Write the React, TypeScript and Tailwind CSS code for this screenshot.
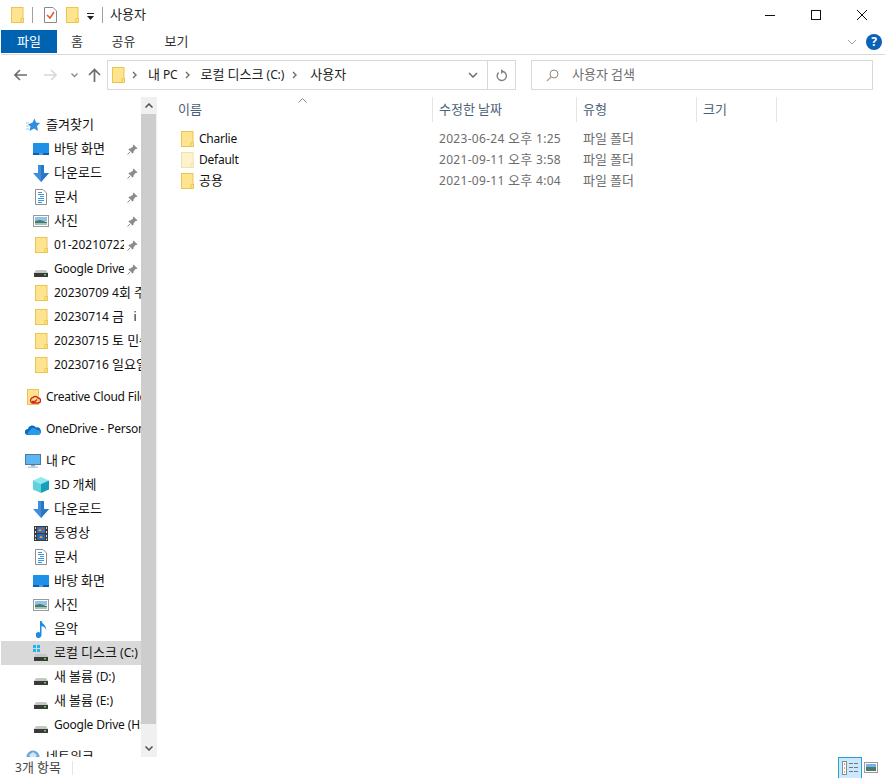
import type { ReactNode } from 'react';

const FONT = "font-['Noto_Sans','Noto_Sans_CJK_KR',sans-serif]";

// Hangul runs a size up (Noto's hangul is narrower than the original's), latin pulled in a touch
function T({ children }: { children: string }) {
  return (
    <>
      {children.split(/([\uAC00-\uD7A3]+|[A-Za-z]+)/).map((part, i) => {
        if (/^[\uAC00-\uD7A3]+$/.test(part)) return <span key={i} className="text-[13px] leading-[0]">{part}</span>;
        if (/^[A-Za-z]+$/.test(part)) return <span key={i} className="tracking-[-0.25px]">{part}</span>;
        return part;
      })}
    </>
  );
}

function Folder({ pale = false, className = '' }: { pale?: boolean; className?: string }) {
  return (
    <svg width="13" height="16" viewBox="0 0 13 16" className={`shrink-0 ${className}`}>
      <rect x="0.5" y="0.5" width="11.5" height="15" fill={pale ? '#fdf2cc' : '#fee48f'} stroke={pale ? '#f3e2a8' : '#e9c650'} />
      <path d="M10 15.5V11.5H12.5V15.5Z" fill={pale ? '#fdf2cc' : '#fee48f'} stroke={pale ? '#f3e2a8' : '#e9c650'} />
    </svg>
  );
}

function Desktop() {
  return (
    <svg width="16" height="12" viewBox="0 0 16 12">
      <rect width="16" height="12" rx="0.5" fill="#1e90e8" />
      <rect x="0" y="10" width="16" height="2" fill="#0d5fa8" />
      <rect x="6" y="10.5" width="4" height="1" fill="#9fd4f7" />
    </svg>
  );
}

function Download() {
  return (
    <svg width="16" height="17" viewBox="0 0 16 17">
      <path d="M5 0H11V8H16L8 17L0 8H5Z" fill="#3d8fde" />
      <path d="M8 0H11V8H16L8 17Z" fill="#2a76c4" />
    </svg>
  );
}

function Doc() {
  return (
    <svg width="12" height="16" viewBox="0 0 12 16">
      <path d="M0.5 0.5H8L11.5 4V15.5H0.5Z" fill="#fff" stroke="#8e8e8e" />
      <path d="M3 3.5H7M3 5.5H9M5 7.5H9M3 9.5H9M3 11.5H9M3 13.5H7" stroke="#3d97dc" strokeWidth="1" />
    </svg>
  );
}

function Picture() {
  return (
    <svg width="16" height="12" viewBox="0 0 16 12">
      <rect x="0.5" y="0.5" width="15" height="11" fill="#fff" stroke="#9a9a9a" strokeWidth="1" />
      <rect x="2" y="2" width="12" height="4" fill="#8cc4ee" />
      <path d="M2 6L7 5L14 7V10H2Z" fill="#4d7a66" />
      <rect x="2" y="8" width="12" height="2" fill="#a8c2b8" />
    </svg>
  );
}

function Drive({ win = false }: { win?: boolean }) {
  return (
    <svg width="16" height="16" viewBox="0 0 16 16">
      {win && <path d="M0 0H3V3H0ZM4 0H7V3H4ZM0 4H3V7H0ZM4 4H7V7H4Z" fill="#1eb4ee" />}
      <path d="M3 9H13L15 12H1Z" fill="#c6c6c6" />
      <rect x="1" y="12" width="14" height="4" fill="#3a3a3a" />
      <rect x="11" y="13" width="2" height="1.5" fill="#4fd04f" />
    </svg>
  );
}

function Pin() {
  return (
    <svg width="11" height="11" viewBox="0 0 11 11">
      <path d="M6.5 0.5L10.5 4.5L9.5 5L8.5 5L6.5 7.5L6.5 9L5.5 9.5L1.5 5.5L2 4.5L3.5 4.5L6 2.5L6 1Z" fill="#8c8c8c" />
      <path d="M3 8L0.5 10.5" stroke="#8c8c8c" />
    </svg>
  );
}

function Star() {
  return (
    <svg width="14" height="14" viewBox="0 0 14 14">
      <path d="M8.5 0.5L10 4.5L14 5L11 8L12 13L8 10.5L3.5 13L4.5 8.5L2 6.5L6.5 4.5Z" fill="#2d8fe0" />
      <path d="M0 5H3M0 8H2.5M0 11H3" stroke="#9ccbef" />
    </svg>
  );
}

function CreativeCloud() {
  return (
    <svg width="14" height="16" viewBox="0 0 14 16" className="ml-[2px]">
      <rect x="0.5" y="0.5" width="11" height="15" fill="#fee48f" stroke="#e9c650" />
      <path d="M5 14H11A2.5 2.5 0 0 0 11 9A3.2 3.2 0 0 0 6 8.5A3 3 0 0 0 5 14ZM5 12.5H8L10 10.5" fill="none" stroke="#d4271c" strokeWidth="1.4" />
    </svg>
  );
}

function OneDrive() {
  return (
    <svg width="16" height="11" viewBox="0 0 16 11">
      <path d="M3 11A3 3 0 0 1 2.8 5A4.5 4.5 0 0 1 11 3.5A3.8 3.8 0 0 1 13 11Z" fill="#0a6cc4" />
      <path d="M4 11A2.3 2.3 0 0 1 5 6.7A3.5 3.5 0 0 1 11.5 6A2.6 2.6 0 0 1 13.5 11Z" fill="#2a9be8" />
    </svg>
  );
}

function Monitor() {
  return (
    <svg width="16" height="14" viewBox="0 0 16 14">
      <rect x="0.5" y="0.5" width="15" height="10" fill="#5db6f2" stroke="#4d7b9e" />
      <rect x="6" y="11" width="4" height="1.5" fill="#7da4c0" />
      <rect x="3" y="12.5" width="10" height="1.5" fill="#b8cfe0" />
    </svg>
  );
}

function Cube() {
  return (
    <svg width="16" height="16" viewBox="0 0 16 16">
      <path d="M8 0L16 3.5L8 7L0 3.5Z" fill="#8eeaf0" />
      <path d="M0 3.5L8 7V16L0 12.5Z" fill="#5fd0dc" />
      <path d="M16 3.5L8 7V16L16 12.5Z" fill="#189fb8" />
    </svg>
  );
}

function Film() {
  return (
    <svg width="14" height="15" viewBox="0 0 14 15">
      <rect width="14" height="15" fill="#3a3a3a" />
      <path d="M1 1H2V3H1ZM1 5H2V7H1ZM1 9H2V11H1ZM1 12.5H2V14H1ZM12 1H13V3H12ZM12 5H13V7H12ZM12 9H13V11H12ZM12 12.5H13V14H12Z" fill="#ddd" />
      <rect x="3" y="1" width="8" height="6" fill="#2f72c4" />
      <rect x="3" y="8" width="8" height="6" fill="#2a64ae" />
      <path d="M4 5L6 2.5L8 5ZM5 12L7 9.5L9 12Z" fill="#e8a42c" />
      <rect x="8" y="2" width="2" height="2" fill="#d94a2c" />
    </svg>
  );
}

function Note() {
  return (
    <svg width="11" height="17" viewBox="0 0 11 17">
      <path d="M4 0H5.5C6 3 10.5 4 10 9C9.5 6.5 7.5 5.5 5.5 5V14A3 3 0 1 1 4 11.4Z" fill="#1c8ae6" />
    </svg>
  );
}

function Network() {
  return (
    <svg width="16" height="14" viewBox="0 0 16 14">
      <circle cx="8" cy="7" r="6.5" fill="#6aa6d8" />
      <path d="M4 5L8 2L12 5L10 8H6Z" fill="#d2e6f4" />
      <rect x="0" y="9" width="16" height="3" fill="#86a8c2" />
    </svg>
  );
}

type NavItem = { label: string; icon: ReactNode; pin?: boolean; child?: boolean; selected?: boolean };

const navGroups: NavItem[][] = [
  [
    { label: '즐겨찾기', icon: <Star /> },
    { label: '바탕 화면', icon: <Desktop />, pin: true, child: true },
    { label: '다운로드', icon: <Download />, pin: true, child: true },
    { label: '문서', icon: <Doc />, pin: true, child: true },
    { label: '사진', icon: <Picture />, pin: true, child: true },
    { label: '01-20210722', icon: <Folder />, pin: true, child: true },
    { label: 'Google Drive (H:)', icon: <Drive />, pin: true, child: true },
    { label: '20230709 4회 주일', icon: <Folder />, child: true },
    { label: '20230714 금   i', icon: <Folder />, child: true },
    { label: '20230715 토 민수기', icon: <Folder />, child: true },
    { label: '20230716 일요일', icon: <Folder />, child: true },
  ],
  [{ label: 'Creative Cloud Files', icon: <CreativeCloud /> }],
  [{ label: 'OneDrive - Personal', icon: <OneDrive /> }],
  [
    { label: '내 PC', icon: <Monitor /> },
    { label: '3D 개체', icon: <Cube />, child: true },
    { label: '다운로드', icon: <Download />, child: true },
    { label: '동영상', icon: <Film />, child: true },
    { label: '문서', icon: <Doc />, child: true },
    { label: '바탕 화면', icon: <Desktop />, child: true },
    { label: '사진', icon: <Picture />, child: true },
    { label: '음악', icon: <Note />, child: true },
    { label: '로컬 디스크 (C:)', icon: <Drive win />, child: true, selected: true },
    { label: '새 볼륨 (D:)', icon: <Drive />, child: true },
    { label: '새 볼륨 (E:)', icon: <Drive />, child: true },
    { label: 'Google Drive (H:)', icon: <Drive />, child: true },
  ],
  [{ label: '네트워크', icon: <Network /> }],
];

function NavRow({ item }: { item: NavItem }) {
  return (
    <div className={`flex h-6 items-center ${item.selected ? 'bg-[#d9d9d9]' : ''} ${item.child ? 'pl-[32px]' : 'pl-[24px]'}`}>
      <span className="flex w-[16px] shrink-0 items-center justify-center">{item.icon}</span>
      <span className={`ml-[5px] flex items-center self-stretch overflow-hidden text-[#111] ${item.pin ? 'w-[70px]' : 'min-w-0 flex-1'}`}>
        <span className="shrink-0 whitespace-pre"><T>{item.label}</T></span>
      </span>
      {item.pin && <span className="ml-[2px] flex w-[12px] shrink-0 justify-center"><Pin /></span>}
    </div>
  );
}

function Sep({ className = '' }: { className?: string }) {
  return <span className={`h-4 w-px bg-[#a0a0a0] ${className}`} />;
}

function Crumb({ className = '' }: { className?: string }) {
  return (
    <svg width="5" height="8" viewBox="0 0 5 8" className={`shrink-0 ${className}`}>
      <path d="M1 1L4 4L1 7" fill="none" stroke="#6d6d6d" strokeWidth="1.4" />
    </svg>
  );
}

const files = [
  { name: 'Charlie', date: '2023-06-24 오후 1:25', pale: false },
  { name: 'Default', date: '2021-09-11 오후 3:58', pale: true },
  { name: '공용', date: '2021-09-11 오후 4:04', pale: false },
];

export default function App() {
  return (
    <div className={`${FONT} flex h-[778px] w-[886px] flex-col overflow-hidden bg-white pl-px pr-px text-[12px] leading-4 text-[#111]`}>
      {/* title bar */}
      <div className="flex h-[30px] shrink-0 items-center">
        <Folder className="ml-[10px]" />
        <Sep className="ml-[8px]" />
        <svg width="13" height="16" viewBox="0 0 13 16" className="ml-[11px]">
          <path d="M0.5 0.5H9L12.5 4V15.5H0.5Z" fill="#fff" stroke="#8a8a8a" />
          <path d="M3 8L6 11L10 5" fill="none" stroke="#e2562a" strokeWidth="1.5" />
        </svg>
        <Folder className="ml-[9px]" />
        <svg width="7" height="7" viewBox="0 0 7 7" className="ml-[8px] mt-[3px]">
          <path d="M0 0H7V1H0ZM0 3H7L3.5 7Z" fill="#222" />
        </svg>
        <Sep className="ml-[8px]" />
        <span className="ml-[7px] text-[#222]"><T>사용자</T></span>
        <div className="ml-auto flex">
          <span className="flex h-[30px] w-[46px] items-center justify-center">
            <svg width="10" height="10" viewBox="0 0 10 10"><path d="M0 5.5H10" stroke="#111" /></svg>
          </span>
          <span className="flex h-[30px] w-[46px] items-center justify-center">
            <svg width="10" height="10" viewBox="0 0 10 10"><rect x="0.5" y="0.5" width="9" height="9" fill="none" stroke="#111" /></svg>
          </span>
          <span className="flex h-[30px] w-[46px] items-center justify-center">
            <svg width="10" height="10" viewBox="0 0 10 10"><path d="M0 0L10 10M10 0L0 10" stroke="#111" /></svg>
          </span>
        </div>
      </div>

      {/* ribbon tabs */}
      <div className="flex h-[25px] shrink-0 items-start border-b border-[#dadada]">
        <span className="flex h-[23px] w-[56px] items-center justify-center bg-[#0063b1] text-white"><span><T>파일</T></span></span>
        <span className="flex h-[23px] w-[40px] items-center justify-center text-[#333]"><span><T>홈</T></span></span>
        <span className="flex h-[23px] w-[53px] items-center justify-center text-[#333]"><span><T>공유</T></span></span>
        <span className="flex h-[23px] w-[53px] items-center justify-center text-[#333]"><span><T>보기</T></span></span>
        <div className="ml-auto mr-[3px] flex h-[23px] items-center gap-[9px]">
          <svg width="10" height="6" viewBox="0 0 10 6"><path d="M1 1L5 5L9 1" fill="none" stroke="#a6a6a6" /></svg>
          <span className="flex h-[16px] w-[16px] items-center justify-center rounded-full bg-[#0a62b8] text-[12px] font-bold text-white">?</span>
        </div>
      </div>

      {/* address row */}
      <div className="flex h-[42px] shrink-0 items-start pt-[5px]">
        <div className="flex h-[30px] w-[106px] items-center">
          <svg width="13" height="12" viewBox="0 0 13 12" className="ml-[13px]">
            <path d="M6 1L1 6L6 11M1 6H13" fill="none" stroke="#6d6d6d" strokeWidth="1.6" />
          </svg>
          <svg width="13" height="12" viewBox="0 0 13 12" className="ml-[17px]">
            <path d="M7 1L12 6L7 11M0 6H12" fill="none" stroke="#d9d9d9" strokeWidth="1.6" />
          </svg>
          <svg width="7" height="5" viewBox="0 0 7 5" className="ml-[14px]">
            <path d="M0.5 0.5L3.5 3.5L6.5 0.5" fill="none" stroke="#8a8a8a" strokeWidth="1.4" />
          </svg>
          <svg width="13" height="14" viewBox="0 0 13 14" className="ml-[10px]">
            <path d="M6.5 14V1.5M1 7L6.5 1.5L12 7" fill="none" stroke="#6d6d6d" strokeWidth="1.7" />
          </svg>
        </div>
        <div className="flex h-[30px] w-[409px] items-center border border-[#d9d9d9]">
          <Folder className="ml-[4px]" />
          <Crumb className="ml-[7px]" />
          <span className="ml-[11px] text-[#222]"><T>내 PC</T></span>
          <Crumb className="ml-[8px]" />
          <span className="ml-[10px] text-[#222]"><T>로컬 디스크 (C:)</T></span>
          <Crumb className="ml-[8px]" />
          <span className="ml-[13px] text-[#222]"><T>사용자</T></span>
          <svg width="10" height="6" viewBox="0 0 10 6" className="ml-auto mr-[9px]">
            <path d="M1 1L5 5L9 1" fill="none" stroke="#6d6d6d" strokeWidth="1.5" />
          </svg>
          <div className="flex h-full w-[28px] items-center justify-center border-l border-[#d9d9d9]">
            <svg width="12" height="13" viewBox="0 0 12 13">
              <path d="M7 2.5A4.6 4.6 0 1 1 2.6 3.6" fill="none" stroke="#808080" strokeWidth="1.4" />
              <path d="M5 0V5L8 2.5Z" fill="#808080" />
            </svg>
          </div>
        </div>
        <div className="ml-[15px] flex h-[30px] w-[342px] items-center border border-[#d9d9d9]">
          <svg width="13" height="13" viewBox="0 0 13 13" className="ml-[14px]">
            <circle cx="8" cy="5" r="4" fill="none" stroke="#8a8a8a" />
            <path d="M5 8L1 12" stroke="#c49a7a" strokeWidth="1.2" />
          </svg>
          <span className="ml-[13px] text-[#6d6d6d]"><T>사용자 검색</T></span>
        </div>
      </div>

      {/* body */}
      <div className="flex min-h-0 flex-1">
        <nav className="flex w-[140px] shrink-0 flex-col gap-2 overflow-hidden pt-[16px]">
          {navGroups.map((group, i) => (
            <div key={i}>
              {group.map((item, j) => <NavRow key={j} item={item} />)}
            </div>
          ))}
        </nav>

        {/* nav scrollbar */}
        <div className="flex w-[16px] shrink-0 flex-col bg-[#f0f0f0]">
          <div className="flex h-[17px] items-center justify-center">
            <svg width="8" height="5" viewBox="0 0 8 5"><path d="M0.5 4.5L4 1L7.5 4.5" fill="none" stroke="#505050" strokeWidth="1.5" /></svg>
          </div>
          <div className="h-[610px] w-[15px] bg-[#cdcdcd]" />
          <div className="mt-auto flex h-[17px] items-center justify-center">
            <svg width="8" height="5" viewBox="0 0 8 5"><path d="M0.5 0.5L4 4L7.5 0.5" fill="none" stroke="#505050" strokeWidth="1.5" /></svg>
          </div>
        </div>

        {/* file list */}
        <div className="min-w-0 flex-1">
          <div className="relative grid h-[25px] grid-cols-[276px_144px_120px_80px] text-[#4c607a]">
            <svg width="9" height="5" viewBox="0 0 9 5" className="absolute left-[141px] top-px">
              <path d="M0.5 4.5L4.5 0.5L8.5 4.5" fill="none" stroke="#8a8a8a" />
            </svg>
            <span className="flex items-center border-r border-[#e5e5e5] pl-[21px]"><span><T>이름</T></span></span>
            <span className="flex items-center border-r border-[#e5e5e5] pl-[6px]"><span><T>수정한 날짜</T></span></span>
            <span className="flex items-center border-r border-[#e5e5e5] pl-[6px]"><span><T>유형</T></span></span>
            <span className="flex items-center border-r border-[#e5e5e5] pl-[6px]"><span><T>크기</T></span></span>
          </div>
          <div className="pt-[6px]">
            {files.map(f => (
              <div key={f.name} className="grid h-[21px] grid-cols-[276px_144px_120px] items-center text-[#6d6d6d]">
                <span className="flex items-center pl-[24px] text-[#111]">
                  <Folder pale={f.pale} />
                  <span className="ml-[5px]"><T>{f.name}</T></span>
                </span>
                <span className="pl-[6px] tracking-[0.3px]"><T>{f.date}</T></span>
                <span className="pl-[6px]"><T>파일 폴더</T></span>
              </div>
            ))}
          </div>
        </div>
      </div>

      {/* status bar */}
      <div className="flex h-[21px] shrink-0 items-center">
        <span className="ml-[14px] w-[57px] text-[#444]"><T>3개 항목</T></span>
        <span className="h-[14px] w-px bg-[#e5e5e5]" />
        <div className="ml-auto mr-[7px] flex items-center">
          <span className="flex h-[22px] w-[24px] items-center justify-center border border-[#26a0da] bg-[#cce8ff]">
            <svg width="16" height="14" viewBox="0 0 16 14">
              <rect x="0.5" y="0.5" width="4" height="13" fill="#fff" stroke="#8a8a8a" />
              <path d="M2 3H3M2 7H3" stroke="#555" />
              <path d="M2 11H3" stroke="#c8483a" />
              <path d="M7 2.5H11M12 2.5H16M7 6.5H11M12 6.5H16M7 10.5H11M12 10.5H16" stroke="#777" />
            </svg>
          </span>
          <span className="ml-[2px] flex w-[14px] justify-center">
            <svg width="14" height="11" viewBox="0 0 14 11">
              <rect x="0.5" y="0.5" width="13" height="10" fill="#fff" stroke="#9a9a9a" />
              <rect x="2" y="2" width="10" height="3" fill="#6fb4ee" />
              <rect x="2" y="5" width="10" height="4" fill="#4d7a66" />
            </svg>
          </span>
        </div>
      </div>
    </div>
  );
}
